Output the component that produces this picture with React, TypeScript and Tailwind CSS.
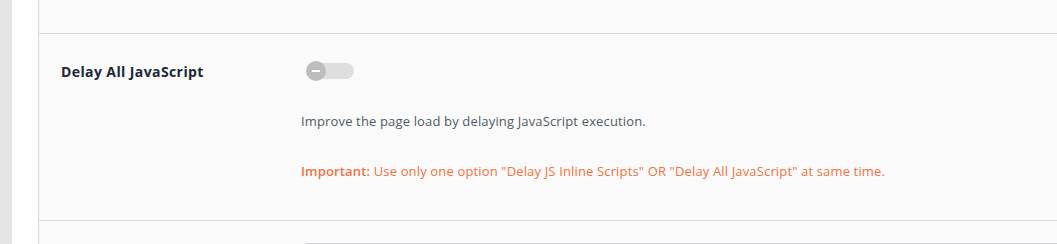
export default function App() {
  return (
    <div className="flex h-[244px] w-[1057px] overflow-hidden bg-[#fafafa] font-['Open_Sans',sans-serif]">
      <div className="w-[12px] shrink-0 bg-[#e5e5e5]" />
      <div className="w-[26px] shrink-0 bg-white" />
      <div className="flex flex-1 flex-col border-l border-[#d9d9d9]">
        <div className="h-[34px] shrink-0 border-b border-[#dcdcdc]" />
        <div className="flex h-[187px] shrink-0 border-b border-[#dcdcdc]">
          <div className="w-[262px] shrink-0 pl-[22px] pt-[27px]">
            <h3 className="text-[14px] font-bold tracking-[0.4px] text-[#1b2838]">Delay All JavaScript</h3>
          </div>
          <div className="flex flex-col pt-[27px]">
            {/* toggle, off */}
            <div className="relative ml-[5px] h-[20px] w-[48px]">
              <div className="absolute left-[4px] top-[2px] h-[16px] w-[44px] rounded-full bg-[#dedede]" />
              <div className="absolute left-0 top-0 flex h-[20px] w-[20px] items-center justify-center rounded-full bg-[#bdbdbd]">
                <span className="block h-[1.5px] w-[8px] bg-white" />
              </div>
            </div>
            <p className="mt-[31px] text-[13px] tracking-[0.15px] text-[#4f5a66]">
              Improve the page load by delaying JavaScript execution.
            </p>
            <p className="mt-[30px] text-[13px] tracking-[0.15px] text-[#f0723f]">
              <span className="font-semibold">Important:</span> Use only one option "Delay JS Inline Scripts" OR "Delay All JavaScript" at same time.
            </p>
          </div>
        </div>
        <div className="flex flex-1 pl-[265px] pt-[22px]">
          <div className="h-[10px] w-[760px] rounded-t-[3px] border-t border-[#cfcfd6] bg-white" />
        </div>
      </div>
    </div>
  );
}
